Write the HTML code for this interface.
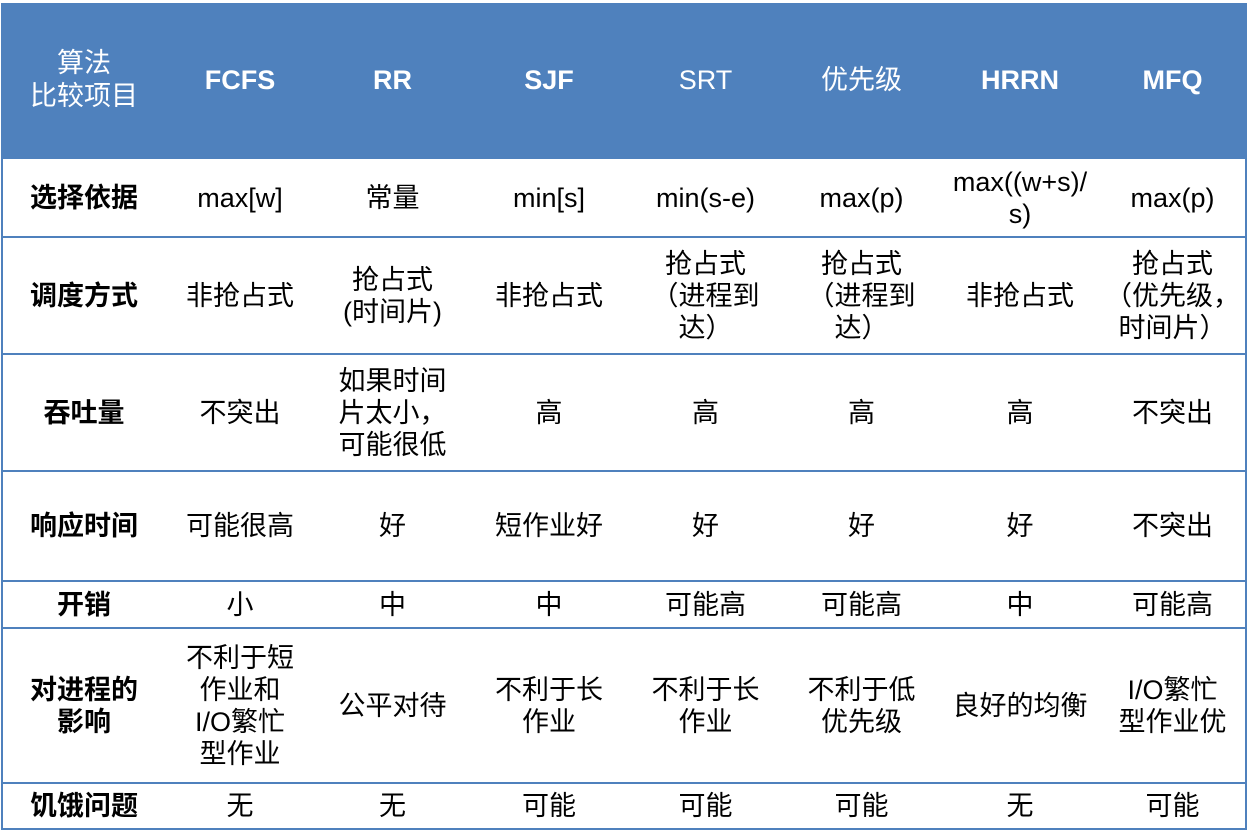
<!DOCTYPE html>
<html><head><meta charset="utf-8"><style>
html,body{margin:0;padding:0;background:#fff;width:1247px;height:831px;overflow:hidden}
table{position:absolute;left:1px;top:3px;border-collapse:collapse;table-layout:fixed;width:1244px;
font-family:"Liberation Sans","Noto Sans CJK SC",sans-serif;font-size:27px;line-height:32px;color:#000}
td{text-align:center;vertical-align:middle;padding:0 2px;border-top:2px solid #4f81bd;border-bottom:2px solid #4f81bd;white-space:nowrap}
td:first-child{border-left:2px solid #4f81bd;font-weight:bold}
td:last-child{border-right:2px solid #4f81bd}
tr.h td{background:#4f81bd;color:#fff;font-weight:bold;padding-bottom:2px}
tr.h td.n{font-weight:normal}
</style></head><body>
<table>
<colgroup><col style="width:163px"><col style="width:150px"><col style="width:155px"><col style="width:158px"><col style="width:155px"><col style="width:157px"><col style="width:160px"><col style="width:146px"></colgroup>
<tr class="h" style="height:154px"><td style="font-weight:normal;line-height:33px">算法<br>比较项目</td><td>FCFS</td><td>RR</td><td>SJF</td><td class="n">SRT</td><td class="n">优先级</td><td>HRRN</td><td>MFQ</td></tr>
<tr style="height:79px"><td>选择依据</td><td>max[w]</td><td>常量</td><td>min[s]</td><td>min(s-e)</td><td>max(p)</td><td>max((w+s)/<br>s)</td><td>max(p)</td></tr>
<tr style="height:117px"><td>调度方式</td><td>非抢占式</td><td>抢占式<br>(时间片)</td><td>非抢占式</td><td>抢占式<br>（进程到<br>达）</td><td>抢占式<br>（进程到<br>达）</td><td>非抢占式</td><td>抢占式<br>（优先级，<br>时间片）</td></tr>
<tr style="height:117px"><td>吞吐量</td><td>不突出</td><td>如果时间<br>片太小，<br>可能很低</td><td>高</td><td>高</td><td>高</td><td>高</td><td>不突出</td></tr>
<tr style="height:110px"><td>响应时间</td><td>可能很高</td><td>好</td><td>短作业好</td><td>好</td><td>好</td><td>好</td><td>不突出</td></tr>
<tr style="height:47px"><td>开销</td><td>小</td><td>中</td><td>中</td><td>可能高</td><td>可能高</td><td>中</td><td>可能高</td></tr>
<tr style="height:155px"><td>对进程的<br>影响</td><td>不利于短<br>作业和<br>I/O繁忙<br>型作业</td><td>公平对待</td><td>不利于长<br>作业</td><td>不利于长<br>作业</td><td>不利于低<br>优先级</td><td>良好的均衡</td><td>I/O繁忙<br>型作业优</td></tr>
<tr style="height:46px"><td>饥饿问题</td><td>无</td><td>无</td><td>可能</td><td>可能</td><td>可能</td><td>无</td><td>可能</td></tr>
</table>
</body></html>
